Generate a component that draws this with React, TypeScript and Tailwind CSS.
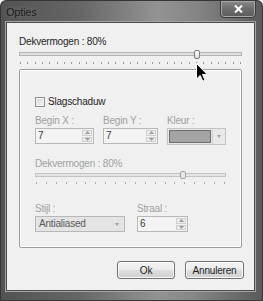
import React from "react";

function Ticks({ n, className, color }: { n: number; className: string; color: string }) {
  return (
    <div className={"flex justify-between " + className}>
      {Array.from({ length: n }).map((_, i) => (
        <div key={i} className={"w-[1px] h-[2px] " + color} />
      ))}
    </div>
  );
}

function SpinButtons() {
  return (
    <div className="w-[12px] flex flex-col gap-[1px] p-[1px]">
      <div className="flex-1 flex items-center justify-center border border-[#cfcfcf] bg-[#ececec]">
        <svg width="5" height="3" viewBox="0 0 5 3"><path d="M0 3 L2.5 0 L5 3 Z" fill="#9a9a9a" /></svg>
      </div>
      <div className="flex-1 flex items-center justify-center border border-[#cfcfcf] bg-[#ececec]">
        <svg width="5" height="3" viewBox="0 0 5 3"><path d="M0 0 L2.5 3 L5 0 Z" fill="#9a9a9a" /></svg>
      </div>
    </div>
  );
}

function Spin({ value, w }: { value: string; w: string }) {
  return (
    <div className={"flex h-[16px] border border-[#b8b8b8] bg-[#f3f3f3] " + w}>
      <div className="flex-1 pl-[2px] text-[10px] leading-[14px] text-[#3a3a3a]">{value}</div>
      <SpinButtons />
    </div>
  );
}

function Label({ children }: { children: React.ReactNode }) {
  return <div className="text-[10px] leading-[12px] text-[#a0a0a0]">{children}</div>;
}

function Button({ children, w }: { children: React.ReactNode; w: string }) {
  return (
    <div
      className={
        "h-[18px] flex items-center justify-center rounded-[3px] border border-[#707070] bg-[linear-gradient(180deg,#f4f4f4_0%,#ebebeb_50%,#dddddd_51%,#cfcfcf_100%)] shadow-[inset_0_0_0_1px_#fbfbfb] text-[10px] text-[#1e1e1e] " +
        w
      }
    >
      {children}
    </div>
  );
}

export default function App() {
  return (
    <div className="w-[263px] h-[301px] bg-[#363636] p-[1px] rounded-t-[6px] font-['Liberation_Sans',Arial,sans-serif] tracking-[-0.2px]">
      <div className="h-full flex flex-col rounded-t-[5px] bg-[linear-gradient(90deg,#525252_0%,#666666_30%,#939393_60%,#858585_75%,#5a5a5a_100%)]">
        <div className="h-[21px] relative flex items-start">
          <div className="pl-[5px] pt-[5px] text-[11px] leading-[13px] text-[#1c1c1c] [text-shadow:0_0_6px_rgba(255,255,255,0.35)]">
            Opties
          </div>
          <div className="absolute right-[6px] top-[-1px] w-[36px] h-[18px] rounded-b-[4px] border border-[#3a3a3a] bg-[linear-gradient(180deg,#8a8a8a_0%,#6c6c6c_50%,#5a5a5a_100%)] shadow-[inset_0_0_0_1px_#a8a8a8] flex items-center justify-center">
            <svg width="9" height="8" viewBox="0 0 9 8">
              <path d="M1 0.5 L8 7.5 M8 0.5 L1 7.5" stroke="#ffffff" strokeWidth="2" />
            </svg>
          </div>
        </div>
        <div className="flex-1 ml-[5px] mr-[7px] mb-[9px] border border-[#4d4d4d] shadow-[0_0_0_1px_#a4a4a4]">
          <div className="h-full bg-[#f0f0f0] flex flex-col px-[12px]">
            <div className="mt-[13px] text-[10px] leading-[12px] text-[#1e1e1e]">Dekvermogen : 80%</div>
            <div className="relative h-[11px] flex items-center">
              <div className="w-full h-[4px] border border-[#b4b4b4] bg-[#e0e0e0]" />
              <div className="absolute left-[175px] top-[2px] w-[6px] h-[9px] rounded-[2px] border border-[#7d7d7d] bg-[linear-gradient(180deg,#ffffff,#dcdcdc)]" />
            </div>
            <Ticks n={31} className="mt-[3px] mx-[1px]" color="bg-[#9a9a9a]" />
            <div className="mt-[5px] h-[179px] border border-[#9c9c9c] rounded-[2px] shadow-[inset_0_0_0_1px_#ffffff] px-[15px] pt-[27px] flex flex-col">
              <div className="flex items-center h-[10px] gap-[3px]">
                <div className="w-[10px] h-[10px] border border-[#8e8f8f] bg-[linear-gradient(135deg,#d4d4d4,#f6f6f6)] shadow-[inset_0_0_0_1px_#f4f4f4]" />
                <div className="text-[10px] leading-[12px] text-[#1e1e1e]">Slagschaduw</div>
              </div>
              <div className="mt-[8px] flex gap-[9px]">
                <div className="flex flex-col gap-[1px] w-[59px]">
                  <Label>Begin X :</Label>
                  <Spin value="7" w="w-[59px]" />
                </div>
                <div className="flex flex-col gap-[1px] w-[55px]">
                  <Label>Begin Y :</Label>
                  <Spin value="7" w="w-[55px]" />
                </div>
                <div className="flex flex-col gap-[1px] w-[59px]">
                  <Label>Kleur :</Label>
                  <div className="h-[17px] w-[59px] flex border border-[#c4c4c4] bg-[#e9e9e9]">
                    <div className="flex-1 m-[1px] border border-[#6c6c6c] bg-[#a4a4a4]" />
                    <div className="w-[13px] flex items-center justify-center border-l border-[#d0d0d0]">
                      <svg width="4" height="3" viewBox="0 0 4 3"><path d="M0 0 L2 3 L4 0 Z" fill="#a0a0a0" /></svg>
                    </div>
                  </div>
                </div>
              </div>
              <div className="mt-[13px]">
                <Label>Dekvermogen : 80%</Label>
              </div>
              <div className="relative h-[9px] flex items-center">
                <div className="w-full h-[4px] border border-[#c3c3c3] bg-[#e4e4e4]" />
                <div className="absolute left-[145px] top-[1px] w-[6px] h-[8px] rounded-[2px] border border-[#a3a3a3] bg-[#e8e8e8]" />
              </div>
              <Ticks n={20} className="mt-[3px] mx-[1px]" color="bg-[#aaaaaa]" />
              <div className="mt-[19px] flex gap-[12px]">
                <div className="flex flex-col gap-[1px] w-[90px]">
                  <Label>Stijl :</Label>
                  <div className="h-[16px] flex items-center border border-[#b7b7b7] bg-[#e4e4e4] pl-[3px] pr-[5px]">
                    <div className="flex-1 text-[10px] leading-[12px] text-[#5a5a5a]">Antialiased</div>
                    <svg width="4" height="3" viewBox="0 0 4 3"><path d="M0 0 L2 3 L4 0 Z" fill="#a0a0a0" /></svg>
                  </div>
                </div>
                <div className="flex flex-col gap-[1px] w-[51px]">
                  <Label>Straal :</Label>
                  <Spin value="6" w="w-[51px]" />
                </div>
              </div>
            </div>
            <div className="mt-[13px] flex justify-end gap-[10px] mr-[-2px]">
              <Button w="w-[58px]">Ok</Button>
              <Button w="w-[59px]">Annuleren</Button>
            </div>
          </div>
        </div>
      </div>
      <svg className="absolute left-[196px] top-[63px]" width="12" height="19" viewBox="0 0 12 19">
        <path d="M0.5 0.5 L0.5 16 L4.2 12.4 L6.8 18.2 L9 17.2 L6.5 11.5 L11.2 11.5 Z" fill="#000000" stroke="#ffffff" strokeWidth="1" />
      </svg>
    </div>
  );
}
